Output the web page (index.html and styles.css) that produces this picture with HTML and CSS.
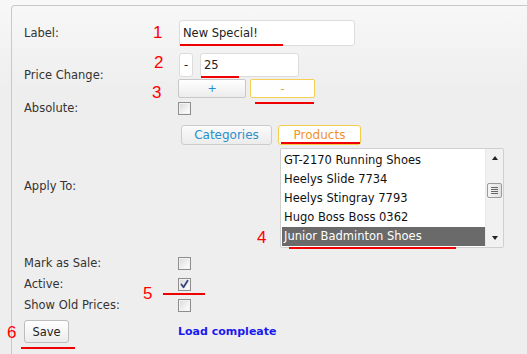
FILE: index.html
```html
<!DOCTYPE html>
<html>
<head>
<meta charset="utf-8">
<link rel="stylesheet" href="styles.css">
</head>
<body>
<div class="page">
  <div class="panel">
    <div class="row r1">
      <span class="lbl">Label:</span>
      <div class="val"><input class="txt label-input" type="text" value="New Special!"></div>
    </div>
    <div class="row r2">
      <span class="lbl">Price Change:</span>
      <div class="val price">
        <div class="price-top">
          <span class="sign-box">-</span>
          <input class="txt num-input" type="text" value="25">
        </div>
        <div class="price-btns">
          <button class="pm plus">+</button>
          <button class="pm neg">-</button>
        </div>
      </div>
    </div>
    <div class="row r3">
      <span class="lbl">Absolute:</span>
      <div class="val"><span class="cb"></span></div>
    </div>
    <div class="row r4">
      <span class="lbl">Apply To:</span>
      <div class="val apply">
        <div class="tabs">
          <span class="tab cat">Categories</span>
          <span class="tab prod">Products</span>
        </div>
        <div class="list">
          <div class="items">
            <div class="item">GT-2170 Running Shoes</div>
            <div class="item">Heelys Slide 7734</div>
            <div class="item">Heelys Stingray 7793</div>
            <div class="item">Hugo Boss Boss 0362</div>
            <div class="item sel">Junior Badminton Shoes</div>
          </div>
          <div class="sb">
            <span class="arrow up"></span>
            <span class="thumb"><i></i><i></i><i></i><i></i></span>
            <span class="arrow down"></span>
          </div>
        </div>
      </div>
    </div>
    <div class="row r5">
      <span class="lbl">Mark as Sale:</span>
      <div class="val"><span class="cb"></span></div>
    </div>
    <div class="row r6">
      <span class="lbl">Active:</span>
      <div class="val"><span class="cb checked"><svg width="11" height="11" viewBox="0 0 11 11"><path d="M2.5 5.5 L4.5 8.2 L8.6 1.8" fill="none" stroke="#34447f" stroke-width="1.8" stroke-linecap="round" stroke-linejoin="round"/></svg></span></div>
    </div>
    <div class="row r7">
      <span class="lbl">Show Old Prices:</span>
      <div class="val"><span class="cb"></span></div>
    </div>
    <div class="row r8">
      <div><button class="save">Save</button></div>
      <div class="val"><span class="status">Load compleate</span></div>
    </div>
  </div>

  <span class="ann n1">1</span>
  <span class="ann n2">2</span>
  <span class="ann n3">3</span>
  <span class="ann n4">4</span>
  <span class="ann n5">5</span>
  <span class="ann n6">6</span>
  <span class="uline u1"></span>
  <span class="uline u2"></span>
  <span class="uline u3"></span>
  <span class="uline ut"></span>
  <span class="uline u4"></span>
  <span class="uline u5"></span>
  <span class="uline u6"></span>
</div>
</body>
</html>
```

FILE: styles.css
```css
html, body {
  margin: 0;
  padding: 0;
}
body {
  background: linear-gradient(#f8f8f8 0, #eeeeee 90px) no-repeat, #eeeeee;
  font-family: "DejaVu Sans", sans-serif;
  font-size: 11.5px;
  color: #333;
}
.page {
  position: relative;
  width: 527px;
  height: 354px;
  overflow: hidden;
  padding-top: 5px;
  box-sizing: border-box;
}
.panel {
  margin-left: 11px;
  border-top: 1px solid #c9c9c9;
  border-left: 1px solid #c9c9c9;
  border-top-left-radius: 4px;
  padding: 14px 0 0 12px;
  height: 400px;
}
.row {
  display: grid;
  grid-template-columns: 154px 1fr;
  align-items: center;
}
.lbl {
  line-height: 13px;
  white-space: nowrap;
}
.val {
  display: flex;
  align-items: center;
}
.r1 { height: 26px; }
.r2 { height: 45px; margin-top: 7px; }
.r3 { height: 13px; margin-top: 4px; }
.r4 { height: 123px; margin-top: 10px; }
.r5 { height: 13px; margin-top: 9px; }
.r6 { height: 13px; margin-top: 8px; }
.r7 { height: 13px; margin-top: 8px; }
.r8 { height: 23px; margin-top: 8px; }

.txt {
  box-sizing: border-box;
  border: 1px solid #dcdcdc;
  border-radius: 3px;
  background: #fff;
  font: inherit;
  color: #222;
  padding: 0 3px;
  margin: 0;
  outline: none;
}
.label-input {
  width: 176px;
  height: 26px;
  margin-left: 1px;
}
.price {
  flex-direction: column;
  align-items: flex-start;
  gap: 2px;
}
.price-top {
  display: flex;
  margin-left: 1px;
}
.sign-box {
  box-sizing: border-box;
  width: 14px;
  height: 24px;
  border: 1px solid #dcdcdc;
  border-radius: 3px;
  background: #fff;
  color: #222;
  display: flex;
  align-items: center;
  justify-content: center;
}
.num-input {
  width: 99px;
  height: 24px;
  margin-left: 7px;
}
.price-btns {
  display: flex;
  gap: 4px;
}
.pm {
  box-sizing: border-box;
  height: 19px;
  width: 68px;
  border: 1px solid #c8c8c8;
  border-radius: 2px;
  background: linear-gradient(#ffffff, #ececec);
  color: #1e8fd6;
  font-family: "DejaVu Sans", sans-serif;
  font-size: 11px;
  padding: 0;
  margin: 0;
  line-height: 17px;
}
.pm.neg {
  width: 65px;
  border-color: #f6cf55;
  background: #fefefe;
  color: #e8941f;
}

.cb {
  box-sizing: border-box;
  display: block;
  width: 13px;
  height: 13px;
  border: 1px solid #8e8e8e;
  background: linear-gradient(135deg, #d8d8d8, #f6f6f6 70%, #ffffff);
  box-shadow: inset 0 0 0 1px #f2f2f2;
  position: relative;
}
.cb svg {
  display: block;
  position: absolute;
  left: 0;
  top: 0;
}

.apply {
  flex-direction: column;
  align-items: flex-start;
  gap: 3px;
}
.tabs {
  display: flex;
  gap: 6px;
  margin-left: 3px;
}
.tab {
  box-sizing: border-box;
  height: 20px;
  display: flex;
  align-items: center;
  justify-content: center;
  border-radius: 3px;
  font-size: 12px;
}
.tab.cat {
  width: 91px;
  border: 1px solid #cccccc;
  background: linear-gradient(#fbfbfb, #ececec);
  color: #2c8fcb;
}
.tab.prod {
  width: 83px;
  border: 1px solid #f5cc48;
  background: #ffffff;
  color: #f0922c;
}
.list {
  box-sizing: border-box;
  margin-left: 102px;
  width: 224px;
  height: 100px;
  border: 1px solid #cfcfcf;
  border-radius: 2px;
  background: #fff;
  display: flex;
}
.items {
  flex: 1;
  padding: 2px 0 0 1px;
  overflow: hidden;
}
.item {
  height: 19px;
  line-height: 19px;
  padding-left: 2px;
  color: #111;
  white-space: nowrap;
}
.item.sel {
  background: #6a6a6a;
  color: #fff;
}
.sb {
  width: 17px;
  background: #f1f1f1;
  border-left: 1px solid #e8e8e8;
  display: flex;
  flex-direction: column;
  align-items: center;
}
.arrow {
  width: 0;
  height: 0;
  border-left: 3.5px solid transparent;
  border-right: 3.5px solid transparent;
}
.arrow.up {
  margin-top: 7px;
  border-bottom: 4px solid #222;
}
.arrow.down {
  margin-top: auto;
  margin-bottom: 7px;
  border-top: 4px solid #222;
}
.thumb {
  box-sizing: border-box;
  margin-top: 23px;
  width: 15px;
  height: 15px;
  border: 1px solid #9a9a9a;
  border-radius: 2px;
  background: linear-gradient(90deg, #f4f4f4, #e2e2e2);
  display: flex;
  flex-direction: column;
  align-items: center;
  justify-content: center;
  gap: 1px;
}
.thumb i {
  display: block;
  width: 7px;
  height: 1px;
  background: #666;
}

.save {
  box-sizing: border-box;
  width: 45px;
  height: 23px;
  border: 1px solid #bdbdbd;
  border-radius: 3px;
  background: linear-gradient(#ffffff, #ececec);
  font-family: "DejaVu Sans", sans-serif;
  font-size: 11.5px;
  color: #222;
  padding: 0;
  margin: 0;
}
.status {
  color: #1a1af0;
  font-weight: bold;
  font-size: 11px;
}

.ann {
  position: absolute;
  font-family: "Liberation Sans", Arial, sans-serif;
  font-size: 17px;
  line-height: 17px;
  color: #ff0000;
}
.n1 { left: 153px; top: 24px; }
.n2 { left: 154px; top: 54px; }
.n3 { left: 152px; top: 84px; }
.n4 { left: 257px; top: 229px; }
.n5 { left: 143px; top: 285px; }
.n6 { left: 7px; top: 324px; }

.uline {
  position: absolute;
  height: 2px;
  background: #f00000;
}
.u1 { left: 180px; top: 44px; width: 103px; }
.u2 { left: 201px; top: 76px; width: 38px; }
.u3 { left: 255px; top: 102px; width: 59px; }
.ut { left: 281px; top: 142px; width: 79px; }
.u4 { left: 289px; top: 247px; width: 167px; }
.u5 { left: 163px; top: 293px; width: 42px; }
.u6 { left: 21px; top: 347px; width: 54px; }
```
